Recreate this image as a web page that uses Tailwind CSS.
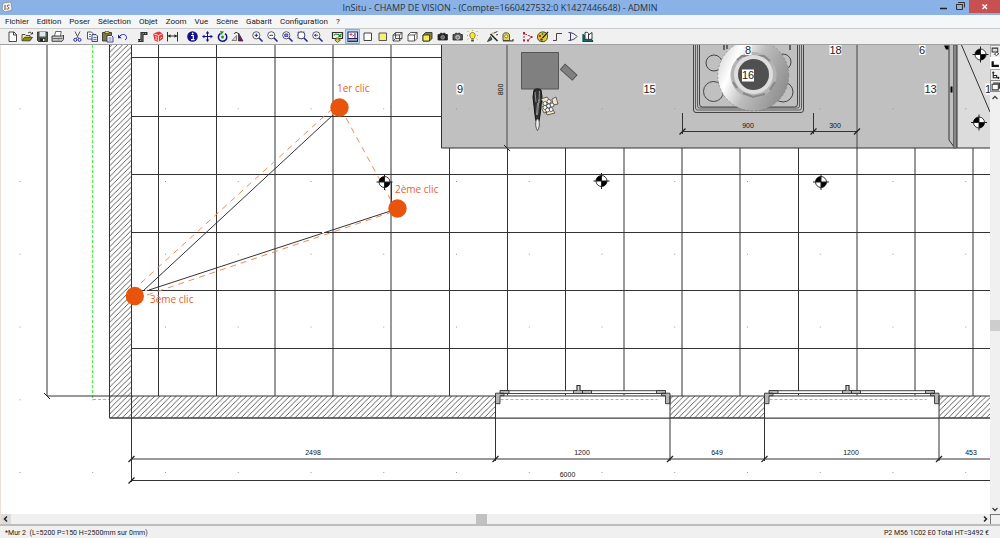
<!DOCTYPE html>
<html lang="fr">
<head>
  <meta charset="UTF-8" />
  <meta name="viewport" content="width=device-width, initial-scale=1.0"/>
  <title>InSitu - CHAMP DE VISION</title>
  <script src="https://cdn.jsdelivr.net/npm/@tailwindcss/browser@4"></script>
</head>
<body class="h-screen flex flex-col overflow-hidden bg-[#f0f0f0] text-[#222] font-['Open_Sans',sans-serif]">

  <!-- Title bar -->
  <header class="h-[15px] shrink-0 flex items-start bg-[#8ab2e6]">
    <div class="w-20 pl-px pt-px">
      <svg class="size-3" viewBox="0 0 12 12">
        <path d="M2 2l8-1 1 8-7 2-3-3z" fill="#f4f1ee" stroke="#8d8d8d" stroke-width=".8"/>
        <path d="M4 4v5M8.500 4.200c-2-.8-3 .8-1.500 1.800s1 2.500-1.500 2" fill="none" stroke="#6e4f45" stroke-width="1"/>
      </svg>
    </div>
    <h1 class="flex-1 text-center text-[9px] leading-[16px] text-[#2b333d]">InSitu - CHAMP DE VISION - (Compte=1660427532:0 K1427446648) - ADMIN</h1>
    <div class="w-20 flex justify-end">
      <button aria-label="Réduire" class="w-4 h-3 flex items-center justify-center">
        <svg class="w-4 h-3" viewBox="0 0 16 12"><path d="M3 8.500h7" stroke="#222" stroke-width="1.500"/></svg>
      </button>
      <button aria-label="Restaurer" class="w-4 h-3 flex items-center justify-center">
        <svg class="w-4 h-3" viewBox="0 0 16 12"><path d="M3.500 4.500h6v5h-6zM3 4.500h7M5 2.500h6.500v5" fill="none" stroke="#333"/></svg>
      </button>
      <button aria-label="Fermer" class="w-[31px] h-[13px] flex items-center justify-center bg-[#c75050]">
        <svg class="size-2" viewBox="0 0 8 8"><path d="M1.500 1.500l4.500 4.500M6 1.500L1.500 6" stroke="#fff" stroke-width="1.400"/></svg>
      </button>
    </div>
  </header>

  <!-- Menu -->
  <nav class="h-[14px] shrink-0 flex gap-2 pl-[5px] bg-[#f5f6f8] border-b border-[#c8c8c8] font-[Roboto,sans-serif] text-[8px] leading-[13px]">
    <a href="#">Fichier</a>
    <a href="#">Edition</a>
    <a href="#">Poser</a>
    <a href="#">Sélection</a>
    <a href="#">Objet</a>
    <a href="#">Zoom</a>
    <a href="#">Vue</a>
    <a href="#">Scène</a>
    <a href="#">Gabarit</a>
    <a href="#">Configuration</a>
    <a href="#">?</a>
  </nav>

  <!-- Toolbar -->
  <div class="h-4 shrink-0 flex gap-[5px] pl-[5px] border-b border-[#a0a0a0]" role="toolbar">
    <div class="flex">
      <button aria-label="Nouveau" class="size-[15px]"><svg viewBox="0 0 15 15"><path d="M4 3h5l2.500 2.500v7H4zM8.500 3v3h3" fill="#fff" stroke="#333" stroke-width=".9"/></svg></button>
      <button aria-label="Ouvrir" class="size-[15px]"><svg viewBox="0 0 15 15"><path d="M2 11.500V5.500h3l1 1h4v2" fill="#f5f08a" stroke="#444" stroke-width=".9"/><path d="M2 11.800l2.500-3.500h8l-2.500 3.500z" fill="#8a8a12" stroke="#333" stroke-width=".8"/><path d="M8 4c1.500-1.300 3-1 4 .8M12.500 3v2h-2" fill="none" stroke="#222" stroke-width=".8"/></svg></button>
      <button aria-label="Enregistrer" class="size-[15px]"><svg viewBox="0 0 15 15"><path d="M2.500 3h10v9.500h-9l-1-1z" fill="#53584a" stroke="#222" stroke-width=".8"/><path d="M4.500 3h6v4.500h-6z" fill="#dfe7f2"/><path d="M5 9.500h5v3H5z" fill="#222"/><path d="M8 10h1.500v2H8z" fill="#eee"/></svg></button>
      <button aria-label="Imprimer" class="size-[15px]"><svg viewBox="0 0 15 15"><path d="M4.500 7l1.200-4.500h5.500L10.500 7" fill="#fff" stroke="#444" stroke-width=".8"/><path d="M2 7h10.500l1-1v4.500l-1.500 1.800H2z" fill="#c9c9c9" stroke="#333" stroke-width=".9"/><path d="M2.500 9.500h10" stroke="#555" stroke-width=".8"/><path d="M7.500 10.800h2" stroke="#b3a91f"/></svg></button>
    </div>
    <div class="flex">
      <button aria-label="Couper" class="size-[15px]"><svg viewBox="0 0 15 15"><path d="M5 2.500l3.500 7M10 2.500L6.500 9.500" fill="none" stroke="#555"/><circle cx="5.300" cy="10.800" r="1.500" fill="none" stroke="#23239b"/><circle cx="9.500" cy="10.800" r="1.500" fill="none" stroke="#23239b"/></svg></button>
      <button aria-label="Copier" class="size-[15px]"><svg viewBox="0 0 15 15"><path d="M2.500 3h4l1.500 1.500V10H2.500z" fill="#fff" stroke="#444" stroke-width=".9"/><path d="M7 5.500h4l1.500 1.500v5.500H7z" fill="#e3e6fb" stroke="#2c2c8f" stroke-width=".9"/><path d="M4 5.500h2M4 7.500h2M8.500 8.500h3M8.500 10.500h3" stroke="#444" stroke-width=".7"/></svg></button>
      <button aria-label="Coller" class="size-[15px]"><svg viewBox="0 0 15 15"><path d="M2.500 3.500h9v8.500h-9z" fill="#7c7a33" stroke="#333" stroke-width=".9"/><path d="M5 2.500h4v2H5z" fill="#d9d67a" stroke="#333" stroke-width=".6"/><path d="M7 6.500h4.500l1.500 1.500v5H7z" fill="#fff" stroke="#2c2c8f" stroke-width=".9"/><path d="M8.500 9h3M8.500 11h3" stroke="#2c2c8f" stroke-width=".7"/></svg></button>
      <button aria-label="Annuler" class="size-[15px]"><svg viewBox="0 0 15 15"><path d="M3.500 8.500c3-4.500 8-3.500 8 0 0 1-.5 2-1.300 2.500" fill="none" stroke="#23239b"/><path d="M3 5.500v3.800h3.800z" fill="#23239b"/></svg></button>
    </div>
    <div class="flex">
      <button aria-label="Mur" class="size-[15px]"><svg viewBox="0 0 15 15"><path d="M3 11.500h4v-7h5.500" fill="none" stroke="#333" stroke-width="3.200"/><path d="M3 11.500h4v-7h5.500" fill="none" stroke="#999" stroke-width="1.200" stroke-dasharray="1 1"/></svg></button>
      <button aria-label="Catalogue" class="size-[15px]"><svg viewBox="0 0 15 15"><path d="M3 4.500L9 2.500l4 2v5l-4.500 3.500-4-1.500z" fill="#e2383a"/><path d="M3 4.500l5.500 2 4.500-2M8.500 6.500V13M5 7.500l2 .8-1.500 2 2 .8M10 9.500l2-1.500" fill="none" stroke="#ffd9d6" stroke-width=".9"/></svg></button>
      <button aria-label="Cotation" class="size-[15px]"><svg viewBox="0 0 15 15"><path d="M2.500 3v9.500M12.500 3v9.500M3 7h9" stroke="#333"/><path d="M3 7l2.500-1.800v3.600zM12 7L9.500 5.200v3.600z" fill="#222"/></svg></button>
    </div>
    <div class="flex">
      <button aria-label="Information" class="size-[15px]"><svg viewBox="0 0 15 15"><circle cx="7.500" cy="7.500" r="5.300" fill="#10108a"/><path d="M6 6.500h2.300v4M6 10.700h3.500" fill="none" stroke="#fff" stroke-width="1.200"/><circle cx="7.700" cy="4.500" r=".9" fill="#fff"/></svg></button>
      <button aria-label="Déplacer" class="size-[15px]"><svg viewBox="0 0 15 15"><path d="M7.500 3v9M3 7.500h9" stroke="#10108a"/><path d="M7.500 2L9.300 4.500H5.700zM7.500 13L5.700 10.500h3.600zM2 7.500l2.500-1.800v3.600zM13 7.500l-2.500 1.800V5.700z" fill="#10108a"/></svg></button>
      <button aria-label="Tourner" class="size-[15px]"><svg viewBox="0 0 15 15"><path d="M5.500 4.500a4.200 4.200 0 1 0 4.500.2" fill="none" stroke="#10108a" stroke-width="1.500"/><path d="M5 2l4 .5-2.500 3.300z" fill="#14a014"/><circle cx="7.500" cy="8" r="1.500" fill="#14a014"/></svg></button>
      <button aria-label="Symétrie" class="size-[15px]"><svg viewBox="0 0 15 15"><path d="M2 11.500l4.500-5v5z" fill="#d8d8d8" stroke="#555" stroke-width=".7"/><path d="M8.500 4l4.500 8H8.500z" fill="#7a1765" stroke="#222" stroke-width=".7"/><path d="M4 5c1-2 3-2 4-.5" fill="none" stroke="#222" stroke-width=".9"/></svg></button>
    </div>
    <div class="flex">
      <button aria-label="Zoom avant" class="size-[15px]"><svg viewBox="0 0 15 15"><circle cx="6.300" cy="6.300" r="3.600" fill="#fff" stroke="#4a4a55" stroke-width=".9"/><path d="M9 9l3.500 3.500" stroke="#23239b" stroke-width="1.600"/><path d="M4.500 6.300h3.600M6.300 4.500v3.600" stroke="#23239b"/></svg></button>
      <button aria-label="Zoom arrière" class="size-[15px]"><svg viewBox="0 0 15 15"><circle cx="6.300" cy="6.300" r="3.600" fill="#fff" stroke="#4a4a55" stroke-width=".9"/><path d="M9 9l3.500 3.500" stroke="#23239b" stroke-width="1.600"/><path d="M4.500 6.300h3.600" stroke="#23239b"/></svg></button>
      <button aria-label="Zoom fenêtre" class="size-[15px]"><svg viewBox="0 0 15 15"><circle cx="6.300" cy="6.300" r="3.600" fill="#fff" stroke="#4a4a55" stroke-width=".9"/><path d="M9 9l3.500 3.500" stroke="#23239b" stroke-width="1.600"/><path d="M4.800 5h3v2.600h-3z" fill="#9c9ce0" stroke="#23239b" stroke-width=".8"/></svg></button>
      <button aria-label="Zoom tout" class="size-[15px]"><svg viewBox="0 0 15 15"><circle cx="6.300" cy="6.300" r="3.600" fill="#fff" stroke="#4a4a55" stroke-width=".9"/><path d="M9 9l3.500 3.500" stroke="#23239b" stroke-width="1.600"/><path d="M3 3h6.600v6.600H3z" fill="none" stroke="#23239b" stroke-width=".6" stroke-dasharray="1.500 1"/></svg></button>
      <button aria-label="Zoom précédent" class="size-[15px]"><svg viewBox="0 0 15 15"><circle cx="6.300" cy="6.300" r="3.600" fill="#fff" stroke="#4a4a55" stroke-width=".9"/><path d="M9 9l3.500 3.500" stroke="#23239b" stroke-width="1.600"/><path d="M4.500 6.300h3.600M6.300 4.800L4.500 6.300l1.800 1.500" fill="none" stroke="#23239b" stroke-width=".9"/></svg></button>
    </div>
    <div class="flex">
      <button aria-label="Rafraîchir" class="size-[15px]"><svg viewBox="0 0 15 15"><path d="M2.500 3.500h10v6h-10z" fill="#f4f6ee" stroke="#333" stroke-width="1.200"/><path d="M4 6.500c1-2 2.500-2 3.500-.5M8 5l3 3M8.500 8l3-3" fill="none" stroke="#2b7a2b" stroke-width="1.100"/><path d="M6 9h3v2l1.500 0L7.500 13.500 4.800 11H6z" fill="#d6cf4a" stroke="#333" stroke-width=".7"/></svg></button>
      <button aria-label="Vue de dessus" aria-pressed="true" class="size-[15px] bg-[#b9d8f8]"><svg viewBox="0 0 15 15"><path d="M.5.500h14v14H.5z" fill="none" stroke="#7fb4ea"/><path d="M3 3h9.500v9.500H3z" fill="#fff" stroke="#23236b" stroke-width="1.100"/><path d="M3 9.500h9.500M10 9.500V4" stroke="#23236b"/><path d="M3.500 11.200h8.500" stroke="#888" stroke-width="1.800"/><path d="M4.500 5.500h3M6 4v3M7.500 7.500l2-2" stroke="#c04a60" stroke-width=".9"/></svg></button>
      <button aria-label="Vue blanche" class="size-[15px]"><svg viewBox="0 0 15 15"><path d="M4 4h7.500v7.500H4z" fill="#fff" stroke="#444"/></svg></button>
      <button aria-label="Vue couleur" class="size-[15px]"><svg viewBox="0 0 15 15"><path d="M4 4h7.500v7.500H4z" fill="#f8f36e" stroke="#555"/></svg></button>
      <button aria-label="Fil de fer" class="size-[15px]"><svg viewBox="0 0 15 15"><path d="M3 6h6.500v6H3zM5.500 3.500H12V9.500H5.500zM3 6l2.500-2.500M9.500 6L12 3.500M9.500 12L12 9.500M3 12l2.500-2.500" fill="none" stroke="#444" stroke-width=".9"/></svg></button>
      <button aria-label="Faces cachées" class="size-[15px]"><svg viewBox="0 0 15 15"><path d="M3 6l2.500-2.500H12V9.500L9.500 12H3zM3 6h6.500v6M9.500 6L12 3.500" fill="#fff" stroke="#444" stroke-width=".9"/></svg></button>
      <button aria-label="Faces colorées" class="size-[15px]"><svg viewBox="0 0 15 15"><path d="M3 6l2.500-2.500H12V9.500L9.500 12H3z" fill="#8a8322" stroke="#333" stroke-width=".9"/><path d="M3 6h6.500v6H3z" fill="#f6ee52" stroke="#333" stroke-width=".9"/></svg></button>
      <button aria-label="Photo" class="size-[15px]"><svg viewBox="0 0 15 15"><path d="M3 5.500h1.500l1-1.300h1.500l.7.800.7-.8h1.500l1 1.300h1.500v5.500H3z" fill="#222" stroke="#222" stroke-width=".8"/><circle cx="7.700" cy="8.300" r="1.800" fill="#666" stroke="#aaa" stroke-width=".8"/></svg></button>
      <button aria-label="Photo réaliste" class="size-[15px]"><svg viewBox="0 0 15 15"><path d="M3 5.500h1.500l1-1.300h1.500l.7.800.7-.8h1.500l1 1.300h1.500v5.500H3z" fill="#555" stroke="#222" stroke-width=".8"/><circle cx="7.700" cy="8.300" r="2" fill="#888" stroke="#ddd" stroke-width=".8"/></svg></button>
      <button aria-label="Éclairage" class="size-[15px]"><svg viewBox="0 0 15 15"><path d="M6.300 9.500C4 7.500 4.500 3.500 7.500 3.500s3.500 4 1.200 6z" fill="#f7ea2b" stroke="#6e6a12" stroke-width=".8"/><path d="M6.200 10.500h2.600v2H6.200z" fill="#444"/><path d="M3.500 3L2.500 2M11.500 3l1-1M7.500 2V1M3 6.500H2M12 6.500h1M3.500 9.500l-1 1M11.500 9.500l1 1" stroke="#a59b1b" stroke-width=".8"/></svg></button>
    </div>
    <div class="flex">
      <button aria-label="Assistant" class="size-[15px]"><svg viewBox="0 0 15 15"><path d="M5.500 5l7 7" stroke="#222" stroke-width="1.600"/><path d="M2.500 12.500l3-5 1.500 3zM9 4l3.500-1.500M11 6l2-.5" fill="#447744" stroke="#333" stroke-width=".9"/><path d="M7.500 3.500l1 1.500" stroke="#c9bd22" stroke-width="1.500"/></svg></button>
      <button aria-label="Mesurer" class="size-[15px]"><svg viewBox="0 0 15 15"><path d="M3 11.500V6c0-3 6-3 6.500 0v5.500z" fill="#e6dc2e" stroke="#444" stroke-width=".9"/><circle cx="6.200" cy="7.300" r="1.500" fill="#fff" stroke="#555" stroke-width=".7"/><path d="M3 11.800h10.500M13 10v2" stroke="#444" stroke-width="1.200"/></svg></button>
    </div>
    <div class="flex">
      <button aria-label="Linéaire" class="size-[15px]"><svg viewBox="0 0 15 15"><path d="M4 12V4.500l8 3.500-4.500 3.500" fill="none" stroke="#a32a3a" stroke-dasharray="2 1"/><path d="M3 3h2v2H3zM3 10.500h2v2H3zM10.500 7h2v2h-2zM7 10.500h2v2H7z" fill="#b71f34"/></svg></button>
      <button aria-label="Palette" class="size-[15px]"><svg viewBox="0 0 15 15"><path d="M2.500 8c0-3.500 3-5.500 6.500-5 3 .5 4 3 3.500 5.500-.5 3-3 4.500-5.500 4.200-3-.2-4.500-2-4.500-4.700z" fill="#e3cf22" stroke="#333" stroke-width=".9"/><circle cx="5" cy="7" r="1.200" fill="#c22"/><circle cx="7.500" cy="5" r="1" fill="#2a8a2a"/><circle cx="6.500" cy="10.500" r="1.200" fill="#1f3bb0"/><path d="M7.500 9l5.500-6" stroke="#222" stroke-width="1.200"/></svg></button>
      <button aria-label="Profil" class="size-[15px]"><svg viewBox="0 0 15 15"><path d="M3 11.500h3.500V4.500H12" fill="none" stroke="#444"/></svg></button>
      <button aria-label="Forme" class="size-[15px]"><svg viewBox="0 0 15 15"><path d="M3.500 3.500c4 0 7 2 8.500 4-1.500 2-4.500 4-8.500 4M5.500 3.800v7.500" fill="none" stroke="#3a3a5a"/></svg></button>
      <button aria-label="Bibliothèque" class="size-[15px]"><svg viewBox="0 0 15 15"><path d="M3 5v7.500h9.500V11" fill="#157070" stroke="#0e4c4c" stroke-width="1.200"/><path d="M5 3.500v7c1.500-.5 2.500-.5 3.500.7V4.500C7.500 3.300 6.500 3 5 3.500zM8.500 11.200c1-1.200 2-1.200 3.500-.7v-7L8.500 6" fill="#fff" stroke="#222" stroke-width=".9"/></svg></button>
    </div>
  </div>

  <div class="flex-1 min-h-0 flex">
    <!-- Floor plan -->
    <main class="flex-1 min-w-0 flex flex-col border-l border-[#eedfdb]">
      <svg class="flex-1 min-h-0 w-full bg-white" role="img" aria-label="Plan de la pièce">
        <defs>
          <pattern id="hatch" width="5.400" height="5.400" patternUnits="userSpaceOnUse">
            <path d="M-1 6.400L6.400-1M-1 1L1-1M4.400 6.400l2-2" stroke="#333" stroke-width=".8"/>
          </pattern>
          <pattern id="dots" x="19.500" y="35.500" width="72.750" height="72.750" patternUnits="userSpaceOnUse">
            <path d="M0 0h1v1H0z" fill="#999"/>
          </pattern>
          <linearGradient id="steel" x1="0" y1=".25" x2="1" y2=".7">
            <stop offset="0" stop-color="#d8d8d8"/>
            <stop offset=".22" stop-color="#fff"/>
            <stop offset=".5" stop-color="#bdbdbd"/>
            <stop offset="1" stop-color="#8c8c8c"/>
          </linearGradient>
          <g id="spot">
            <circle r="5.500" fill="#fff" stroke="#222" stroke-width=".9"/>
            <path d="M0 0V-5.500A5.500 5.500 0 0 0-5.500 0zM0 0V5.500A5.500 5.500 0 0 0 5.500 0z"/>
            <path d="M-8 0H8M0-8V8" stroke="#222"/>
          </g>
          <path id="tick" d="M-3 3L3-3" stroke="#222" stroke-width="1.200"/>
          <g id="window" stroke="#333" stroke-width=".9">
            <path d="M0 0h174.500v22H0z" fill="#fff" stroke="none"/>
            <path d="M0 0h174.500" stroke="#888" stroke-width="1.500"/>
            <path d="M5 3.500h157" stroke="#3dff3d" stroke-width="1.200" stroke-dasharray="3 2"/>
            <path d="M5-5.300h165v2.800H5z" fill="#fff"/>
            <path d="M4.500-5.500h9v3h-9zM161-5.500h9v3h-9zM78-5.500h9v3h-9zM87-5.500h9v3h-9zM0-2.800h8.500v2.500H4.500v8H0zM174.500-2.800H166v2.500h4v8h4.500z" fill="#b5b5b5"/>
            <path d="M81.500-5.500v-5h3v5" fill="#ddd" stroke-width="1.200"/>
          </g>
        </defs>
        <g transform="translate(-1 -45)">
          <rect y="45" width="3000" height="2000" fill="url(#dots)"/>

          <!-- Tiling -->
          <path d="M131.500 57.500H3000M131.500 116.500H3000M131.500 174.500H3000M131.500 232.500H3000M131.500 290.500H3000M131.500 348.500H3000" stroke="#333"/>
          <path d="M158.500 45V396M216.500 45V396M275 45V396M333 45V396M391 45V396M449.500 45V396M507.500 45V396M565.500 45V396M624 45V396M682 45V396M740 45V396M798.500 45V396M857 45V396M915 45V396M973 45V396" stroke="#333"/>

          <!-- Walls -->
          <path d="M109.500 40V418H3000V396H131.500V40z" fill="#fff"/>
          <path d="M109.500 40V418H3000V396H131.500V40z" fill="url(#hatch)" stroke="#333"/>
          <use href="#window" x="495.500" y="396"/>
          <use href="#window" x="764.500" y="396"/>
          <path d="M109.500 418H3000" stroke="#444"/>
          <path d="M92.500 45V399.500H109" fill="none" stroke="#3dff3d" stroke-dasharray="3 2"/>
          <path d="M47 45V396H131" fill="none" stroke="#333"/>
          <path d="M44 393l6 6" stroke="#222"/>

          <!-- Worktop -->
          <path d="M441.500 40H957V148H441.500z" fill="#c0c0c0" stroke="#333"/>
          <path d="M957 40h2000V148H957z" fill="#dcdcdc" stroke="#333"/>
          <path d="M507 45V148M857 45V148" stroke="#444"/>
          <path d="M504 145l6 6" stroke="#222"/>
          <path d="M949 45V140L954.500 147.500" fill="none" stroke="#333"/>
          <path d="M953.500 45h3V148h-3z" fill="#888" stroke="#555" stroke-width=".8"/>
          <path d="M950.500 86.500h2v6h-2zM944 45.500h4.500v4H946z"/>
          <path d="M961.500 45L990 112" stroke="#333"/>
          <path d="M521.500 52.500h37v36.500h-37z" fill="#808080" stroke="#555"/>
          <path d="M-8-3.500H8v7H-8z" transform="translate(568.700 72.200) rotate(42)" fill="#808080" stroke="#555"/>
          <rect x="442" y="45" width="3000" height="102" fill="url(#dots)"/>

          <!-- Utensils -->
          <path d="M534 90c2-1.500 5-1.500 7 0l1 7-2 18-1 6h-3l-1-6-2-18z" fill="#333" stroke="#111"/>
          <path d="M535 92l1 10M539.500 91l-.5 12M537.500 103l-1 12M539 99l-1.500 16" stroke="#aaa" stroke-width=".8"/>
          <path d="M536.500 119c-1.500 4-1 9 1 11.500 2-2.500 2.500-7.500 1-11.500z" fill="#eee" stroke="#333" stroke-width=".8"/>
          <g stroke="#444" stroke-width=".8" fill="#f1e6c4">
            <path d="M541 99l6-2 3 4-6 3zM552 99l4-2 2 7-5 1zM541 107l5-1 1 6-3 1zM546 111l7-1 2 3-8 2z"/>
            <g fill="#fff">
              <circle cx="545" cy="103.500" r="2"/><circle cx="549" cy="101.500" r="2"/><circle cx="552" cy="105" r="2"/>
              <circle cx="548.500" cy="106" r="2"/><circle cx="545" cy="107.500" r="2"/><circle cx="551" cy="109.500" r="2"/><circle cx="547.500" cy="110" r="2"/>
            </g>
          </g>

          <!-- Hob and hood -->
          <g fill="none" stroke="#444">
            <path d="M693.500 45v65q0 2.500 2.500 2.500h105q2.500 0 2.500-2.500V45"/>
            <path d="M695.500 45v63q0 2 2 2h102q2 0 2-2V45M697.500 45v61q0 2 2 2h98q2 0 2-2V45" stroke-width=".8"/>
            <path d="M699.500 45v59q0 3 3 3h92q3 0 3-3V45"/>
            <circle cx="714" cy="63" r="8"/><circle cx="713.500" cy="91.500" r="10"/>
            <circle cx="783" cy="62" r="8"/><circle cx="783" cy="92" r="10"/>
            <path d="M724 45v5M727 45v4M790 45v5" stroke-width="1.500"/>
          </g>
          <circle cx="753.300" cy="75.500" r="35.500" fill="url(#steel)" stroke="#777" stroke-width=".6" stroke-dasharray="2 2"/>
          <circle cx="753.500" cy="75" r="23" fill="#b4b4b4"/>
          <path d="M737 60l5-4h22l6 5M737 88l-4-6M770 90l5-8M743 93l10 4 12-3" fill="none" stroke="#888" stroke-width="2"/>
          <circle cx="753.500" cy="74.500" r="19.500" fill="#dedede"/>
          <circle cx="753.500" cy="74.500" r="15.500" fill="#505050"/>

          <!-- Item numbers -->
          <g fill="#fff">
            <path d="M456.500 83.500h7v11h-7zM643.500 83.500h12v11h-12zM745 45h6.500v10H745zM829.500 45h12v10h-12zM742 69.500h12v12h-12zM919 45h6.500v10H919zM924.500 83.500h12v11h-12zM985.500 83.500h10v11h-10z"/>
          </g>
          <g class="font-['Liberation_Sans',sans-serif] text-[11px]" fill="#222" text-anchor="middle">
            <text x="460" y="93">9</text>
            <text x="649.500" y="93">15</text>
            <text x="748" y="54">8</text>
            <text x="835.500" y="54">18</text>
            <text x="748" y="79">16</text>
            <text x="922" y="54">6</text>
            <text x="930.500" y="93">13</text>
            <text x="988" y="93">1</text>
          </g>

          <!-- Dimensions -->
          <path d="M682.500 113V134M813.500 113V134M682.500 131.500H857M131.500 396V482M495.500 396V461M670 396V461M764.500 396V461M939 396V461M131.500 459H3000M131.500 480.500H3000" stroke="#333"/>
          <use href="#tick" x="682.500" y="131.500"/><use href="#tick" x="813.500" y="131.500"/><use href="#tick" x="857" y="131.500"/>
          <use href="#tick" x="131.500" y="459"/><use href="#tick" x="131.500" y="480.500"/><use href="#tick" x="495.500" y="459"/>
          <use href="#tick" x="670" y="459"/><use href="#tick" x="764.500" y="459"/><use href="#tick" x="939" y="459"/>
          <g class="font-['Liberation_Sans',sans-serif] text-[7px]" fill="#111" text-anchor="middle">
            <text x="748" y="128">900</text>
            <text x="835" y="128">300</text>
            <text x="313" y="455">2498</text>
            <text x="582" y="455">1200</text>
            <text x="717" y="455">649</text>
            <text x="851" y="455">1200</text>
            <text x="971" y="455">453</text>
            <text x="567.500" y="477">6000</text>
            <text transform="translate(503 89.500) rotate(-90)">800</text>
          </g>

          <!-- Field of view -->
          <path d="M143 291L333 115M149 290L389 211.500M391.500 182V203" stroke="#333" fill="none"/>
          <path d="M322 232.500h2M145 291h2" stroke="#fff" stroke-width="1.500"/>
          <path d="M141 283L331 110M147 295L389 213M346 118L392 202" stroke="#ef8a5a" stroke-dasharray="6 5" fill="none"/>
          <use href="#spot" x="384.500" y="182"/>
          <use href="#spot" x="601.500" y="181"/>
          <use href="#spot" x="821" y="182"/>
          <use href="#spot" x="980.500" y="54.500"/>
          <use href="#spot" x="979" y="122.500"/>
          <g fill="#e8540c">
            <circle cx="339.500" cy="107.500" r="9.200"/>
            <circle cx="397.500" cy="208.500" r="9.200"/>
            <circle cx="134.800" cy="296" r="9.200"/>
          </g>
          <g class="font-['Open_Sans',sans-serif] text-[10px]" fill="#e8622a">
            <text x="337" y="92">1er clic</text>
            <text x="395" y="193">2ème clic</text>
            <text x="150" y="303">3ème clic</text>
          </g>
        </g>
      </svg>

      <!-- Horizontal scroll -->
      <div class="h-[10px] shrink-0 flex items-stretch">
        <button aria-label="Défiler à gauche" class="w-[10px] flex items-center justify-center bg-[#dcdcdc]">
          <svg class="size-2" viewBox="0 0 8 8"><path d="M5 1.500L2.500 4 5 6.500" fill="none" stroke="#222" stroke-width="1.500"/></svg>
        </button>
        <div class="flex-1 flex">
          <div class="w-[48%]"></div>
          <div class="w-[11px] bg-[#c1c1c1]"></div>
        </div>
        <button aria-label="Défiler à droite" class="w-[10px] flex items-center justify-center">
          <svg class="size-2" viewBox="0 0 8 8"><path d="M3 1.500L5.500 4 3 6.500" fill="none" stroke="#222" stroke-width="1.500"/></svg>
        </button>
      </div>
    </main>

    <!-- Side tools and vertical scroll -->
    <aside class="w-[10px] shrink-0 flex flex-col">
      <button aria-label="Vue 3D" class="h-3 flex items-center justify-center border-l border-t border-[#aaa]"><svg class="size-[9px]" viewBox="0 0 8 8"><path d="M1 1h5v3.500H1z" fill="#ddd" stroke="#333" stroke-width=".9"/><path d="M3 6.500l2-2 2 1.500-2 1.500z" fill="#fff" stroke="#333" stroke-width=".8"/></svg></button>
      <button aria-label="Vue plan" class="h-3 flex items-center justify-center bg-white"><svg class="size-[9px]" viewBox="0 0 8 8"><path d="M1.500 2v4h5.500" fill="none" stroke="#111" stroke-width="2"/></svg></button>
      <button aria-label="Axes" class="h-[11px] flex items-center justify-center border-l border-t border-[#aaa]"><svg class="size-[9px]" viewBox="0 0 8 8"><path d="M2 .5V6h5.500M2 4h3V6" fill="none" stroke="#222"/><path d="M1 1.500h2M6.500 5v2" stroke="#222"/></svg></button>
      <button aria-label="Feuille" class="h-3 flex items-center justify-center border-l border-y border-[#888]"><svg class="size-[9px]" viewBox="0 0 8 8"><path d="M1 2h5.500v5H1zM2.500 2V.8H7.500V6" fill="#fff" stroke="#333" stroke-width=".9"/></svg></button>
      <button aria-label="Défiler vers le haut" class="h-3 flex items-center justify-center"><svg class="size-2" viewBox="0 0 8 8"><path d="M1.500 5L4 2.500 6.500 5" fill="none" stroke="#444" stroke-width="1.300"/></svg></button>
      <div class="flex-1 flex flex-col">
        <div class="h-[54%]"></div>
        <div class="h-[11px] bg-[#cdcdcd]"></div>
      </div>
      <button aria-label="Défiler vers le bas" class="h-[10px] flex items-center justify-center"><svg class="size-2" viewBox="0 0 8 8"><path d="M1.500 3L4 5.500 6.500 3" fill="none" stroke="#444" stroke-width="1.300"/></svg></button>
      <div class="h-[10px] border-l border-t border-[#777]"></div>
    </aside>
  </div>

  <!-- Status bar -->
  <footer class="h-[14px] shrink-0 flex justify-between border-t-2 border-[#bdbdbd] pl-[5px] pr-[11px] font-[Roboto,sans-serif] text-[7px] leading-[14px]">
    <span class="whitespace-pre">*Mur 2  (L=5200 P=150 H=2500mm sur 0mm)</span>
    <span>P2 M56 1C02 E0 Total HT=3492 €</span>
  </footer>
</body>
</html>
